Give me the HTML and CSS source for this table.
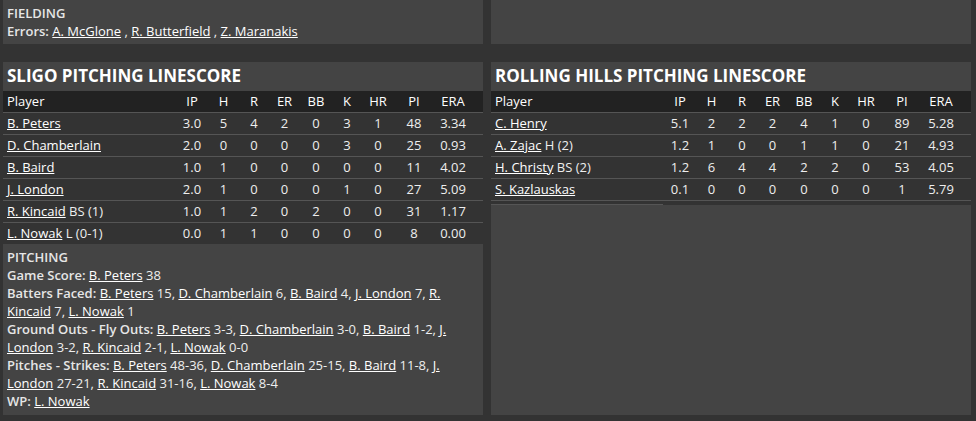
FILE: index.html
```html
<!DOCTYPE html>
<html>
<head>
<meta charset="utf-8">
<link rel="stylesheet" href="styles.css">
</head>
<body>
<div class="page">
  <div class="col">
    <section class="card notes">
      <div class="label">FIELDING</div>
      <div><b>Errors:</b> <a href="#">A. McGlone</a> , <a href="#">R. Butterfield</a> , <a href="#">Z. Maranakis</a></div>
    </section>
    <section class="linescore">
      <h2>SLIGO PITCHING LINESCORE</h2>
      <div class="tbl">
        <div class="row head"><span class="name">Player</span><span>IP</span><span>H</span><span>R</span><span>ER</span><span>BB</span><span>K</span><span>HR</span><span>PI</span><span>ERA</span></div>
        <div class="row"><span class="name"><a href="#">B. Peters</a></span><span>3.0</span><span>5</span><span>4</span><span>2</span><span>0</span><span>3</span><span>1</span><span>48</span><span>3.34</span></div>
        <div class="row"><span class="name"><a href="#">D. Chamberlain</a></span><span>2.0</span><span>0</span><span>0</span><span>0</span><span>0</span><span>3</span><span>0</span><span>25</span><span>0.93</span></div>
        <div class="row"><span class="name"><a href="#">B. Baird</a></span><span>1.0</span><span>1</span><span>0</span><span>0</span><span>0</span><span>0</span><span>0</span><span>11</span><span>4.02</span></div>
        <div class="row"><span class="name"><a href="#">J. London</a></span><span>2.0</span><span>1</span><span>0</span><span>0</span><span>0</span><span>1</span><span>0</span><span>27</span><span>5.09</span></div>
        <div class="row"><span class="name"><a href="#">R. Kincaid</a> BS (1)</span><span>1.0</span><span>1</span><span>2</span><span>0</span><span>2</span><span>0</span><span>0</span><span>31</span><span>1.17</span></div>
        <div class="row"><span class="name"><a href="#">L. Nowak</a> L (0-1)</span><span>0.0</span><span>1</span><span>1</span><span>0</span><span>0</span><span>0</span><span>0</span><span>8</span><span>0.00</span></div>
      </div>
    </section>
    <section class="card notes pitching">
      <div class="label">PITCHING</div>
      <div><b>Game Score:</b> <a href="#">B. Peters</a> 38</div>
      <div><b>Batters Faced:</b> <a href="#">B. Peters</a> 15, <a href="#">D. Chamberlain</a> 6, <a href="#">B. Baird</a> 4, <a href="#">J. London</a> 7, <a href="#">R. Kincaid</a> 7, <a href="#">L. Nowak</a> 1</div>
      <div><b>Ground Outs - Fly Outs:</b> <a href="#">B. Peters</a> 3-3, <a href="#">D. Chamberlain</a> 3-0, <a href="#">B. Baird</a> 1-2, <a href="#">J. London</a> 3-2, <a href="#">R. Kincaid</a> 2-1, <a href="#">L. Nowak</a> 0-0</div>
      <div><b>Pitches - Strikes:</b> <a href="#">B. Peters</a> 48-36, <a href="#">D. Chamberlain</a> 25-15, <a href="#">B. Baird</a> 11-8, <a href="#">J. London</a> 27-21, <a href="#">R. Kincaid</a> 31-16, <a href="#">L. Nowak</a> 8-4</div>
      <div><b>WP:</b> <a href="#">L. Nowak</a></div>
    </section>
  </div>
  <div class="col">
    <section class="card empty"></section>
    <section class="linescore">
      <h2>ROLLING HILLS PITCHING LINESCORE</h2>
      <div class="tbl closed">
        <div class="row head"><span class="name">Player</span><span>IP</span><span>H</span><span>R</span><span>ER</span><span>BB</span><span>K</span><span>HR</span><span>PI</span><span>ERA</span></div>
        <div class="row"><span class="name"><a href="#">C. Henry</a></span><span>5.1</span><span>2</span><span>2</span><span>2</span><span>4</span><span>1</span><span>0</span><span>89</span><span>5.28</span></div>
        <div class="row"><span class="name"><a href="#">A. Zajac</a> H (2)</span><span>1.2</span><span>1</span><span>0</span><span>0</span><span>1</span><span>1</span><span>0</span><span>21</span><span>4.93</span></div>
        <div class="row"><span class="name"><a href="#">H. Christy</a> BS (2)</span><span>1.2</span><span>6</span><span>4</span><span>4</span><span>2</span><span>2</span><span>0</span><span>53</span><span>4.05</span></div>
        <div class="row"><span class="name"><a href="#">S. Kazlauskas</a></span><span>0.1</span><span>0</span><span>0</span><span>0</span><span>0</span><span>0</span><span>0</span><span>1</span><span>5.79</span></div>
      </div>
    </section>
    <div class="rule"></div>
    <section class="card filler"></section>
  </div>
</div>
</body>
</html>
```
FILE: styles.css
```css
html, body {
  margin: 0;
  padding: 0;
  background: #333333;
}
body {
  font-family: "Open Sans", "Liberation Sans", sans-serif;
  font-size: 13px;
  line-height: 18px;
  color: #eeeeee;
}
a {
  color: #ffffff;
  text-decoration: underline;
}
b, .label {
  font-weight: 600;
  color: #e6e6e6;
}
.page {
  display: grid;
  grid-template-columns: 480px 480px;
  column-gap: 8px;
  padding: 0 5px 6px 3px;
  height: 421px;
  box-sizing: border-box;
}
.col {
  display: flex;
  flex-direction: column;
  min-height: 0;
}
.card {
  background: #444444;
}
.notes {
  padding: 4px 4px 4px 4px;
}
.empty {
  height: 44px;
}
.linescore {
  margin-top: 18px;
}
.linescore h2 {
  margin: 0;
  background: #444444;
  height: 29px;
  line-height: 28px;
  padding: 0 4px;
  font-size: 17px;
  font-weight: 700;
  color: #ffffff;
}
.tbl {
  background: #333333;
}
.tbl.closed {
  border-bottom: 1px solid #555555;
}
.row {
  display: grid;
  grid-template-columns: 1fr 32px 31px 30px 31px 32px 30px 32px 40px 38px;
  padding-right: 11px;
  height: 21px;
  line-height: 21px;
  border-top: 1px solid #555555;
}
.row span {
  text-align: center;
  white-space: nowrap;
}
.row .name {
  text-align: left;
  padding-left: 4px;
}
.row.head {
  background: #222222;
  border-top: none;
  color: #ffffff;
}
.pitching {
  flex: 1;
  padding-bottom: 5px;
}
.rule {
  margin-top: 3px;
  width: 172px;
  height: 1px;
  background: #555555;
}
.filler {
  flex: 1;
}
```
